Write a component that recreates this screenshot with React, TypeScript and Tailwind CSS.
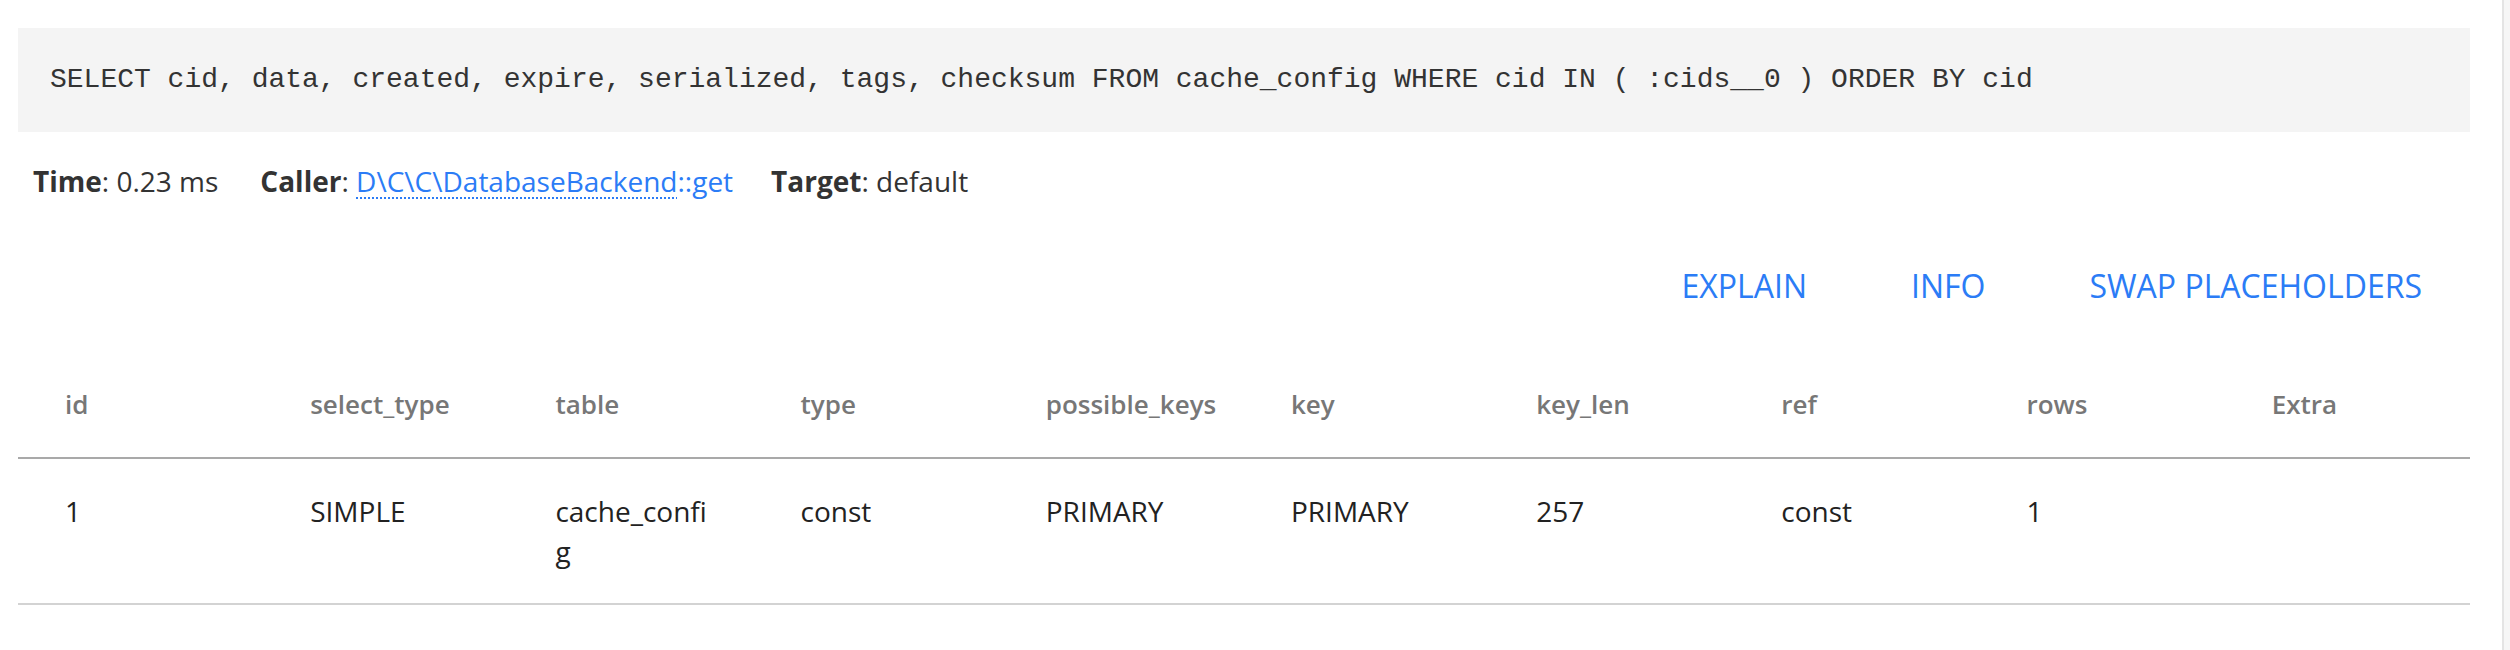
import React from "react";

const headers = ["id", "select_type", "table", "type", "possible_keys", "key", "key_len", "ref", "rows", "Extra"];
const row = ["1", "SIMPLE", "cache_config", "const", "PRIMARY", "PRIMARY", "257", "const", "1", ""];

export default function App() {
  return (
    <div className="flex h-[650px] w-[2510px] bg-white font-['Open_Sans',sans-serif]">
      <div className="w-[2502px] pl-[18px] pr-[32px] pt-[28px]">
        <div className="bg-[#f4f4f4] px-[32px] py-[32px] font-['Liberation_Mono',monospace] text-[28px] leading-[40px] text-[#333] whitespace-pre">
          SELECT cid, data, created, expire, serialized, tags, checksum FROM cache_config WHERE cid IN ( :cids__0 ) ORDER BY cid
        </div>
        <div className="mt-[29px] flex pl-[15px] text-[28px] leading-[40px] text-[#333]">
          <span>
            <b className="font-bold">Time</b>: 0.23 ms
          </span>
          <span className="ml-[42px]">
            <b className="font-bold">Caller</b>:{" "}
            <a className="text-[#2b7cf6]" href="#">
              <abbr className="no-underline underline decoration-dotted decoration-2 underline-offset-[5px]" title="Drupal\Core\Cache\DatabaseBackend">
                D\C\C\DatabaseBackend
              </abbr>
              ::get
            </a>
          </span>
          <span className="ml-[38px]">
            <b className="font-bold">Target</b>: default
          </span>
        </div>
        <div className="mt-[65px] -mr-[4px] flex justify-end">
          {["EXPLAIN", "INFO", "SWAP PLACEHOLDERS"].map((b) => (
            <button key={b} className="px-[52px] text-[32px] leading-[40px] font-medium text-[#2b7cf6]">
              {b}
            </button>
          ))}
        </div>
        <table className="mt-[45px] w-full table-fixed border-collapse leading-[40px]">
          <thead>
            <tr className="border-b-2 border-[#a9a9a9]">
              {headers.map((h) => (
                <th key={h} className="pl-[47px] pr-[40px] pt-[33px] pb-[33px] text-left text-[26px] font-semibold text-[#777] whitespace-nowrap">
                  {h}
                </th>
              ))}
            </tr>
          </thead>
          <tbody>
            <tr className="border-b-2 border-[#d3d3d3]">
              {row.map((c, i) => (
                <td key={i} className="pl-[47px] pr-[40px] py-[32px] align-top text-[28px] text-[#222] break-all">
                  {c}
                </td>
              ))}
            </tr>
          </tbody>
        </table>
      </div>
      <div className="w-[8px] border-l-2 border-[#e4e4e4] bg-[#f6f6f6]" />
    </div>
  );
}
